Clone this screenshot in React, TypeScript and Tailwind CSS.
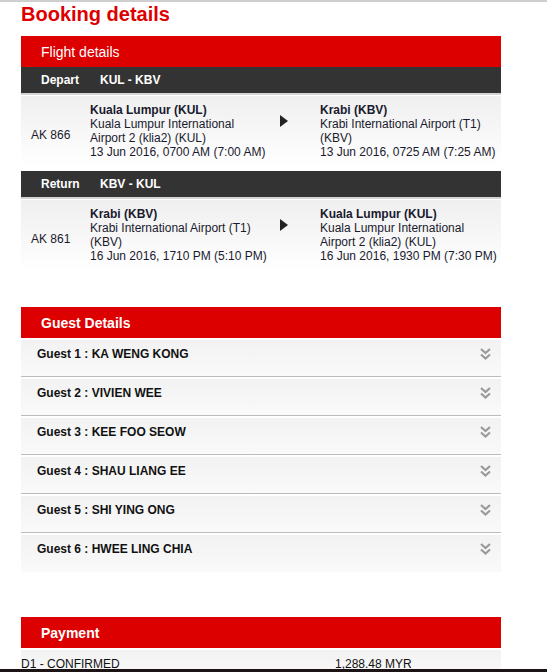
import React from 'react';

type Leg = {
  label: string;
  route: string;
  flight: string;
  from: { city: string; airport: string; time: string };
  to: { city: string; airport: string; time: string };
};

const legs: Leg[] = [
  {
    label: 'Depart',
    route: 'KUL - KBV',
    flight: 'AK 866',
    from: {
      city: 'Kuala Lumpur (KUL)',
      airport: 'Kuala Lumpur International Airport 2 (klia2) (KUL)',
      time: '13 Jun 2016, 0700 AM (7:00 AM)',
    },
    to: {
      city: 'Krabi (KBV)',
      airport: 'Krabi International Airport (T1) (KBV)',
      time: '13 Jun 2016, 0725 AM (7:25 AM)',
    },
  },
  {
    label: 'Return',
    route: 'KBV - KUL',
    flight: 'AK 861',
    from: {
      city: 'Krabi (KBV)',
      airport: 'Krabi International Airport (T1) (KBV)',
      time: '16 Jun 2016, 1710 PM (5:10 PM)',
    },
    to: {
      city: 'Kuala Lumpur (KUL)',
      airport: 'Kuala Lumpur International Airport 2 (klia2) (KUL)',
      time: '16 Jun 2016, 1930 PM (7:30 PM)',
    },
  },
];

const guests = ['KA WENG KONG', 'VIVIEN WEE', 'KEE FOO SEOW', 'SHAU LIANG EE', 'SHI YING ONG', 'HWEE LING CHIA'];

const Chevrons = () => (
  <svg width="11" height="12" viewBox="0 0 11 12" fill="none" stroke="#9a9a9a" strokeWidth="2.2" strokeLinejoin="miter">
    <path d="M1 1 L5.5 5 L10 1" />
    <path d="M1 6.5 L5.5 10.5 L10 6.5" />
  </svg>
);

const Place = ({ city, airport, time }: Leg['from']) => (
  <div>
    <div className="font-bold">{city}</div>
    <div>{airport}</div>
    <div>{time}</div>
  </div>
);

const SectionHeader = ({ title, bold }: { title: string; bold?: boolean }) => (
  <div className={`h-[31px] bg-[#dd0000] text-white text-[14px] pl-[20px] flex items-center ${bold ? 'font-bold' : ''}`}>
    {title}
  </div>
);

export default function App() {
  return (
    <div
      className="min-h-[672px] bg-white border-t-2 border-[#cfcfcf] text-[12px] leading-[14px] text-[#1a1a2e]"
      style={{ fontFamily: '"Liberation Sans", Arial, sans-serif' }}
    >
      <div className="w-[480px] ml-[21px]">
        <h1 className="text-[20px] leading-[24px] font-bold text-[#dd0000]">Booking details</h1>

        <div className="mt-[10px]">
          <SectionHeader title="Flight details" />
          {legs.map((leg, i) => (
            <div key={leg.label} className={i > 0 ? 'mt-[5px]' : ''}>
              <div className="h-[28px] bg-[#333333] border-b-2 border-[#d4d4d4] text-white font-bold flex items-center pl-[20px]">
                <span className="w-[59px]">{leg.label}</span>
                <span>{leg.route}</span>
              </div>
              <div className="mt-[1px] h-[70px] pt-[7px] flex bg-gradient-to-b from-[#efefef] to-[#ffffff]">
                <div className="w-[69px] pl-[10px] self-center">{leg.flight}</div>
                <div className="w-[180px] mr-[10px]">
                  <Place {...leg.from} />
                </div>
                <div className="w-[40px] pt-[12px]">
                  <svg width="8" height="12" viewBox="0 0 8 12">
                    <polygon points="0,0 8,6 0,12" fill="#222" />
                  </svg>
                </div>
                <div className="flex-1">
                  <Place {...leg.to} />
                </div>
              </div>
            </div>
          ))}
        </div>

        <div className="mt-[37px]">
          <SectionHeader title="Guest Details" bold />
          {guests.map((g, i) => (
            <div
              key={g}
              className={`mt-[2px] h-[37px] pt-[7px] pl-[16px] pr-[10px] flex justify-between bg-gradient-to-b from-[#f2f2f2] to-[#fafafa] ${i < guests.length - 1 ? 'border-b border-[#bcbcbc]' : 'h-[36px]'}`}
            >
              <span className="font-bold text-[#111]">
                Guest {i + 1} : {g}
              </span>
              <span className="pt-[1px]">
                <Chevrons />
              </span>
            </div>
          ))}
        </div>

        <div className="mt-[45px]">
          <SectionHeader title="Payment" bold />
          <div className="mt-[2px] h-[30px] pt-[7px] flex bg-gradient-to-b from-[#f2f2f2] to-[#fafafa] text-[#111]">
            <span className="w-[314px]">D1 - CONFIRMED</span>
            <span>1,288.48 MYR</span>
          </div>
        </div>
      </div>
      <div className="fixed bottom-0 left-0 right-0 h-[3px] bg-[#1c1414]" />
    </div>
  );
}
